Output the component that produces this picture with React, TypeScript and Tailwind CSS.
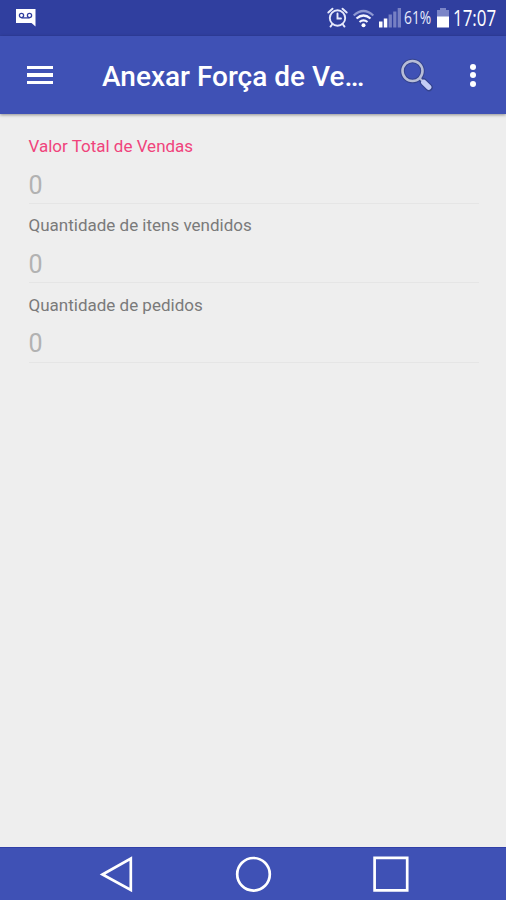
import React from "react";

const FIELDS = [
  { label: "Valor Total de Vendas", tone: "text-[#f0437c]", value: "0" },
  { label: "Quantidade de itens vendidos", tone: "text-[#7a7a7a]", value: "0" },
  { label: "Quantidade de pedidos", tone: "text-[#7a7a7a]", value: "0" },
];

function VoicemailIcon() {
  return (
    <svg width="22" height="20" viewBox="0 0 22 20" fill="none">
      <path d="M1 1H20.500V18.500L16.500 15H1Z" fill="#fff" />
      <circle cx="6.500" cy="7.500" r="2.100" stroke="#303f9f" strokeWidth="1.300" />
      <circle cx="14.500" cy="7.500" r="2.100" stroke="#303f9f" strokeWidth="1.300" />
      <path d="M6.500 9.900H14.500" stroke="#303f9f" strokeWidth="1.300" />
    </svg>
  );
}

function StatusIcons() {
  return (
    <svg width="76" height="26" viewBox="326 5 76 26" fill="none">
      <g stroke="#e6e9fb" strokeWidth="1.900" strokeLinecap="round">
        <circle cx="337.500" cy="18" r="7.700" />
        <path d="M337.500 13.500V18.500H341M328.300 12.500L332.500 8.700M346.700 12.500L342.500 8.700M332.300 24.200L330.500 26.600M342.700 24.200L344.500 26.600" />
      </g>
      <g strokeWidth="2.200">
        <path d="M353.700 15.500Q363.500 6.500 373.300 15.500" stroke="#8e98d2" />
        <path d="M356.500 18.500Q363.500 12.500 370.500 18.500" stroke="#f3f4ff" />
        <path d="M359.500 22Q363.500 18.700 367.500 22" stroke="#f3f4ff" />
      </g>
      <circle cx="363.500" cy="25.200" r="2" fill="#fff" />
      <path d="M379 21.500H382.500V27.500H379ZM383.800 18.500H387.300V27.500H383.800Z" fill="#fff" />
      <path d="M388.600 14.500H391.900V27.500H388.600ZM393.200 11.500H396.400V27.500H393.200ZM397.700 8H401V27.500H397.700Z" fill="#7780c4" />
    </svg>
  );
}

function BatteryIcon() {
  return (
    <svg width="14" height="22" viewBox="436 7 14 22">
      <path d="M440 8H446V10H449V17H437V10H440Z" fill="#7b85c7" />
      <path d="M437 16.500H449V27.500H437Z" fill="#fff" />
    </svg>
  );
}

function SearchIcon() {
  return (
    <svg width="36" height="36" viewBox="399 57 36 36" fill="none">
      <circle cx="412.500" cy="71" r="10" stroke="#34438e" strokeWidth="4.600" />
      <path d="M419.500 78L423 81.500" stroke="#34438e" strokeWidth="4.500" />
      <path d="M423.500 82L429 87.500" stroke="#34438e" strokeWidth="7.500" strokeLinecap="round" />
      <circle cx="412.500" cy="71" r="10" stroke="#b7bdd7" strokeWidth="2.600" />
      <path d="M419.500 78L423 81.500" stroke="#b7bdd7" strokeWidth="2" />
      <path d="M423.800 82.300L428.700 87.200" stroke="#c4cdf5" strokeWidth="5.400" strokeLinecap="round" />
    </svg>
  );
}

export default function App() {
  return (
    <div className="flex h-[900px] w-[506px] flex-col overflow-hidden bg-[#eeeeee] font-['Roboto',sans-serif]">
      <div className="flex h-9 shrink-0 items-center bg-[#303f9f] pl-[15px] text-white">
        <VoicemailIcon />
        <div className="ml-[289px] flex items-center">
          <StatusIcons />
          <span className="ml-[2px] w-[32px] origin-left scale-x-[0.77] whitespace-nowrap pb-px font-['Open_Sans',sans-serif] text-[18px] font-medium leading-[35px] text-[#e6e9fb]">61%</span>
          <BatteryIcon />
          <span className="ml-[3px] w-[46px] origin-left scale-x-[0.77] whitespace-nowrap pb-[2px] font-['Open_Sans',sans-serif] text-[22px] font-medium leading-[34px]">17:07</span>
        </div>
      </div>

      <header className="z-10 flex h-[78px] shrink-0 items-center bg-[#3f51b5] shadow-[0_1px_3px_rgba(0,0,0,0.4)]">
        <div className="ml-[27px] flex w-[26px] flex-col gap-1">
          <div className="h-[3.500px] bg-white" />
          <div className="h-[3.500px] bg-white" />
          <div className="h-[3.500px] bg-white" />
        </div>
        <h1 className="ml-[49px] w-[297px] whitespace-nowrap pt-1 text-[28px] font-medium leading-9 text-white">Anexar Força de Ve…</h1>
        <SearchIcon />
        <div className="ml-[35px] flex flex-col gap-[2.500px]">
          <div className="size-[6px] rounded-full bg-white" />
          <div className="size-[6px] rounded-full bg-white" />
          <div className="size-[6px] rounded-full bg-white" />
        </div>
      </header>

      <main className="flex grow flex-col pt-5 pr-[27px] pl-[28.500px]">
        {FIELDS.map((f) => (
          <div key={f.label} className="flex h-[79.400px] flex-col">
            <span className={"h-6 whitespace-nowrap text-[17px] leading-6 " + f.tone}>{f.label}</span>
            <div className="flex h-[46px] items-center border-b border-[#e5e5e5] pt-[10px] text-[25px] leading-8 text-[#b2b2b2]">
              {f.value}
            </div>
          </div>
        ))}
      </main>

      <nav className="h-[53px] shrink-0 border-t border-[#3040a8] bg-[#3f51b5]">
        <svg width="506" height="52" viewBox="0 848 506 52" fill="none" stroke="#fff" strokeWidth="2.700">
          <path d="M102.500 874.500L130.800 858.500V890Z" />
          <circle cx="253.500" cy="874.300" r="16.300" />
          <path d="M374.600 857.800H407.200V890.400H374.600Z" />
        </svg>
      </nav>
    </div>
  );
}
